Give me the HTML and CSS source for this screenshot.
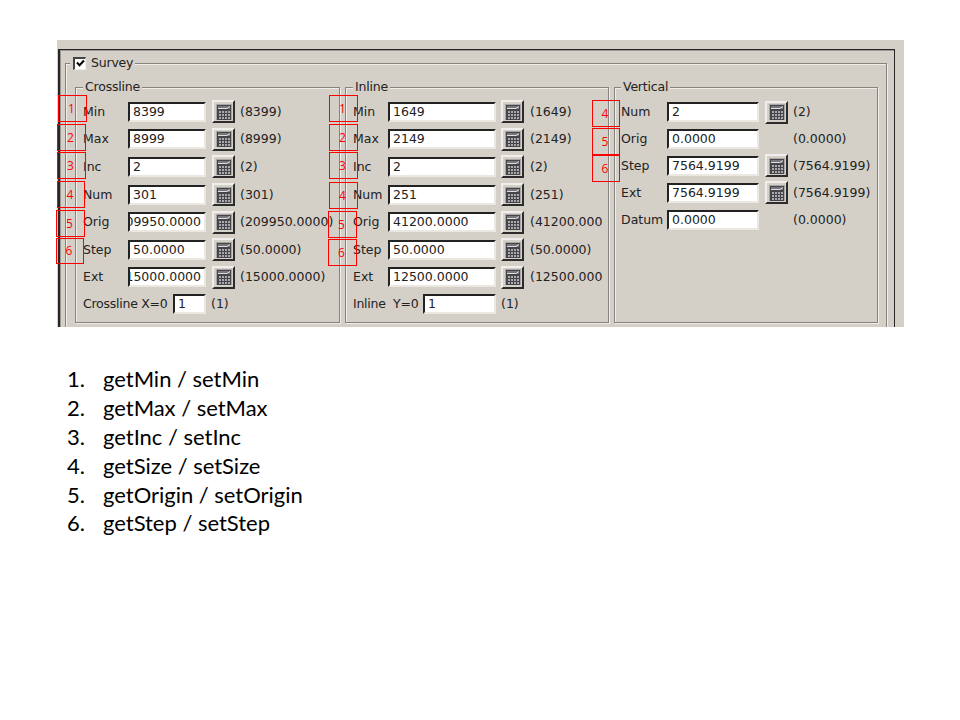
FILE: index.html
```html
<!DOCTYPE html>
<html lang="en">
<head>
<meta charset="utf-8">
<title>Survey</title>
<link rel="stylesheet" href="styles.css">
</head>
<body>
<svg class="defs" width="0" height="0" aria-hidden="true">
  <symbol id="calc" viewBox="0 0 16 16">
    <rect x="0" y="0" width="16" height="16" fill="#a9a7a6"/>
    <rect x="1" y="1" width="14" height="15" fill="#45444a"/>
    <rect x="2" y="2" width="12" height="3" fill="#77767b"/>
    <path d="M2 4.5H11L14 2.5" stroke="#e0dfdd" fill="none"/>
    <path d="M3 7h2v2H3zM6 7h2v2H6zM9 7h2v2H9zM12 7h2v2h-2zM3 10h2v2H3zM6 10h2v2H6zM9 10h2v2H9zM12 10h2v2h-2zM3 13h2v2H3zM6 13h2v2H6zM9 13h2v2H9zM12 13h2v2h-2z" fill="#aaa9ab"/>
  </symbol>
</svg>
<main class="slide">
  <section class="capture">
    <div class="window">
      <div class="group survey">
        <div class="legend survey-legend"><span class="check"><svg viewBox="0 0 9 9" width="9" height="9"><path d="M1 3.5L3.5 6.3L8 1.5" stroke="#000" stroke-width="2" fill="none"/></svg></span>Survey</div>
        <div class="columns">
          <div class="group panel crossline">
            <div class="legend">Crossline</div>
            <div class="rows">
              <div class="row"><span>Min</span><span class="field">8399</span><span class="btn"><svg><use href="#calc"/></svg></span><span class="value">(8399)</span></div>
              <div class="row"><span>Max</span><span class="field">8999</span><span class="btn"><svg><use href="#calc"/></svg></span><span class="value">(8999)</span></div>
              <div class="row"><span>Inc</span><span class="field">2</span><span class="btn"><svg><use href="#calc"/></svg></span><span class="value">(2)</span></div>
              <div class="row"><span>Num</span><span class="field">301</span><span class="btn"><svg><use href="#calc"/></svg></span><span class="value">(301)</span></div>
              <div class="row"><span>Orig</span><span class="field end">209950.0000</span><span class="btn"><svg><use href="#calc"/></svg></span><span class="value">(209950.0000)</span></div>
              <div class="row"><span>Step</span><span class="field">50.0000</span><span class="btn"><svg><use href="#calc"/></svg></span><span class="value">(50.0000)</span></div>
              <div class="row"><span>Ext</span><span class="field end">15000.0000</span><span class="btn"><svg><use href="#calc"/></svg></span><span class="value">(15000.0000)</span></div>
              <div class="row zero"><span>Crossline X=0</span><span class="field">1</span><span class="value">(1)</span></div>
            </div>
          </div>
          <div class="group panel inline">
            <div class="legend">Inline</div>
            <div class="rows">
              <div class="row"><span>Min</span><span class="field">1649</span><span class="btn"><svg><use href="#calc"/></svg></span><span class="value">(1649)</span></div>
              <div class="row"><span>Max</span><span class="field">2149</span><span class="btn"><svg><use href="#calc"/></svg></span><span class="value">(2149)</span></div>
              <div class="row"><span>Inc</span><span class="field">2</span><span class="btn"><svg><use href="#calc"/></svg></span><span class="value">(2)</span></div>
              <div class="row"><span>Num</span><span class="field">251</span><span class="btn"><svg><use href="#calc"/></svg></span><span class="value">(251)</span></div>
              <div class="row"><span>Orig</span><span class="field">41200.0000</span><span class="btn"><svg><use href="#calc"/></svg></span><span class="value">(41200.000</span></div>
              <div class="row"><span>Step</span><span class="field">50.0000</span><span class="btn"><svg><use href="#calc"/></svg></span><span class="value">(50.0000)</span></div>
              <div class="row"><span>Ext</span><span class="field">12500.0000</span><span class="btn"><svg><use href="#calc"/></svg></span><span class="value">(12500.000</span></div>
              <div class="row zero"><span>Inline&nbsp; Y=0</span><span class="field">1</span><span class="value">(1)</span></div>
            </div>
          </div>
          <div class="group panel vertical">
            <div class="legend">Vertical</div>
            <div class="rows">
              <div class="row"><span>Num</span><span class="field">2</span><span class="btn"><svg><use href="#calc"/></svg></span><span class="value">(2)</span></div>
              <div class="row"><span>Orig</span><span class="field">0.0000</span><span></span><span class="value">(0.0000)</span></div>
              <div class="row"><span>Step</span><span class="field">7564.9199</span><span class="btn"><svg><use href="#calc"/></svg></span><span class="value">(7564.9199)</span></div>
              <div class="row"><span>Ext</span><span class="field">7564.9199</span><span class="btn"><svg><use href="#calc"/></svg></span><span class="value">(7564.9199)</span></div>
              <div class="row"><span>Datum</span><span class="field">0.0000</span><span></span><span class="value">(0.0000)</span></div>
            </div>
          </div>
        </div>
      </div>
    </div>
  </section>
  <ol class="methods">
    <li><span>1.</span>getMin / setMin</li>
    <li><span>2.</span>getMax / setMax</li>
    <li><span>3.</span>getInc / setInc</li>
    <li><span>4.</span>getSize / setSize</li>
    <li><span>5.</span>getOrigin / setOrigin</li>
    <li><span>6.</span>getStep / setStep</li>
  </ol>
  <div class="mark c1">1</div>
  <div class="mark c2">2</div>
  <div class="mark c3">3</div>
  <div class="mark c4">4</div>
  <div class="mark c5">5</div>
  <div class="mark c6">6</div>
  <div class="mark i1">1</div>
  <div class="mark i2">2</div>
  <div class="mark i3">3</div>
  <div class="mark i4">4</div>
  <div class="mark i5">5</div>
  <div class="mark i6">6</div>
  <div class="mark v4">4</div>
  <div class="mark v5">5</div>
  <div class="mark v6">6</div>
</main>
</body>
</html>
```
FILE: styles.css
```css
* { box-sizing: border-box; }
body { margin: 0; background: #fff; }
.defs { display: block; }
.slide {
  position: relative;
  width: 960px;
  height: 720px;
  padding: 40px 0 0 57px;
  overflow: hidden;
}
.capture {
  width: 847px;
  height: 287px;
  padding: 9px 0 0 1px;
  background: #d4d0c8;
  overflow: hidden;
  font: 12.5px/16px "DejaVu Sans", sans-serif;
  color: #222;
}
.window {
  width: 837px;
  height: 300px;
  padding: 13px 0 0 5px;
  border: 1px solid #262626;
  border-left-width: 2px;
  box-shadow: inset 1px 1px 0 #9c9994;
}
.group {
  border: 1px solid #858380;
  box-shadow: 1px 1px 0 #f0eeea, inset 1px 1px 0 #f0eeea;
}
.survey {
  width: 822px;
  height: 300px;
  padding-left: 9px;
}
.legend {
  width: max-content;
  height: 16px;
  margin: -9px 0 0 7px;
  padding: 0 2px;
  background: #d4d0c8;
  letter-spacing: -0.2px;
}
.survey-legend {
  display: flex;
  align-items: center;
  margin-left: -5px;
  padding-left: 3px;
}
.check {
  display: grid;
  place-items: center;
  width: 13px;
  height: 13px;
  margin-right: 5px;
  background: #fff;
  border: 2px solid #444;
  border-right: 1px solid #eee;
  border-bottom: 1px solid #eee;
}
.columns { display: flex; gap: 5px; margin-top: 16px; }
.panel { width: 264px; height: 236px; padding-left: 7px; }
.crossline { width: 265px; }
.vertical { padding-left: 6px; }
.panel .legend { margin-left: 0; }
.rows { margin-top: 3px; }
.vertical .rows { margin-top: 4px; }
.row {
  display: grid;
  grid-template-columns: 45px 78px 23px 1fr;
  align-items: center;
  height: 27.6px;
  white-space: nowrap;
}
.inline .row { grid-template-columns: 35px 108px 23px 1fr; }
.vertical .row { grid-template-columns: 46px 92px 23px 1fr; height: 26.8px; }
.field {
  display: flex;
  align-items: center;
  height: 20px;
  padding-left: 3px;
  background: #fff;
  border: 2px solid #222;
  border-right-color: #ebe8e2;
  border-bottom-color: #ebe8e2;
  overflow: hidden;
}
.end { justify-content: flex-end; padding: 0 3px 0 0; }
.btn {
  display: grid;
  place-items: center;
  width: 23px;
  height: 23px;
  position: relative;
  left: 6px;
  border: 2px solid #f0eeea;
  border-right-color: #2c2c2c;
  border-bottom-color: #2c2c2c;
}
.inline .btn { left: 5px; }
.btn svg { width: 16px; height: 16px; display: block; }
.value { padding-left: 11px; }
.row.zero { height: 26px; grid-template-columns: 90px 33px 1fr; }
.inline .row.zero { grid-template-columns: 70px 73px 1fr; }
.zero > span:first-child { letter-spacing: -0.25px; }
.zero .value { padding-left: 5px; }
.methods {
  margin: 38.4px 0 0 10px;
  padding: 0;
  list-style: none;
  font: 22px/28.8px Lato, sans-serif;
  letter-spacing: -0.02px;
  color: #000;
}
.methods li { display: flex; }
.methods span { width: 36px; }
.mark {
  position: absolute;
  display: grid;
  place-items: center;
  width: 29px;
  height: 27px;
  padding-right: 2px;
  border: 1px solid #f00;
  color: #f00;
  font: 12px/14px "Open Sans", sans-serif;
}
.c1 { left: 58px; top: 95px; }
.c2 { left: 57px; top: 124px; }
.c3 { left: 57px; top: 152px; }
.c4 { left: 57px; top: 181px; width: 28px; }
.c5 { left: 56px; top: 210px; }
.c6 { left: 56px; top: 238px; width: 28px; height: 26px; }
.i1 { left: 329px; top: 95px; }
.i2 { left: 329px; top: 124px; }
.i3 { left: 329px; top: 152px; }
.i4 { left: 329px; top: 182px; }
.i5 { left: 328px; top: 211px; }
.i6 { left: 328px; top: 239px; }
.v4 { left: 592px; top: 100px; width: 28px; }
.v5 { left: 592px; top: 128px; width: 28px; }
.v6 { left: 592px; top: 155px; width: 28px; }
```
